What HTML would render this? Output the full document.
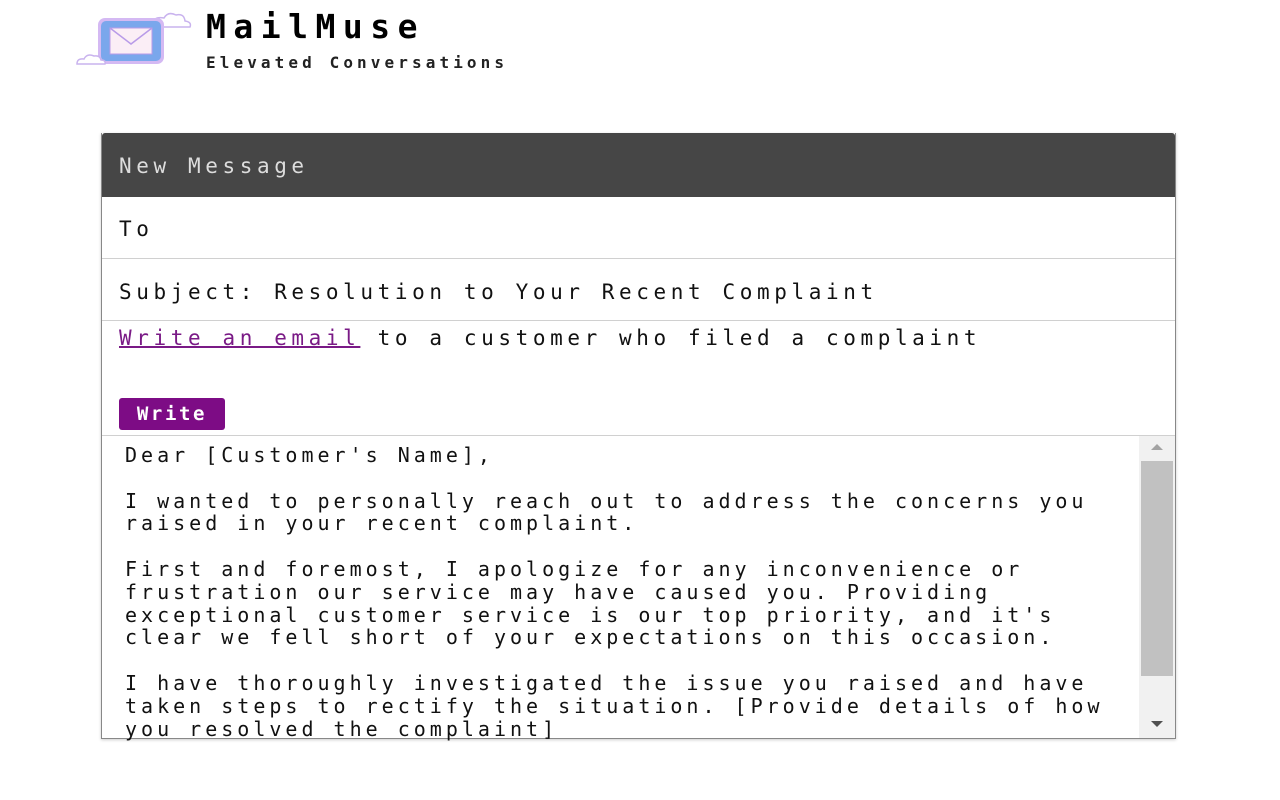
<!DOCTYPE html>
<html><head><style>
body{margin:0;width:1280px;height:800px;background:#fff;font-family:"DejaVu Sans Mono","Liberation Mono",monospace;position:relative;overflow:hidden}
.abs{position:absolute;white-space:pre}
.card{position:absolute;left:101px;top:133px;width:1073px;height:605px;border:1px solid #888;border-top:none;box-shadow:0 1px 3px rgba(0,0,0,.2)}
.hd{position:absolute;left:0;top:0;width:1073px;height:64px;background:#464646;border-radius:3px 3px 0 0}
.row{position:absolute;left:0;width:1073px;border-bottom:1px solid #d0d0d0}
.t{font-size:21px;letter-spacing:4.6px;color:#111}
.b{font-size:20px;letter-spacing:4.0px;color:#111;line-height:22.8px}
</style></head><body>
<svg class="abs" style="left:74px;top:6px" width="125" height="64" viewBox="0 0 125 64">
<path d="M78 18 q2-8 12-6 q4-7 12-3 q8-2 9 6 q7 1 5 6 h-38 q-4-1 0-3z" fill="#fff" stroke="#c9b3ee" stroke-width="1.5"/>
<rect x="24" y="12" width="66" height="46" rx="7" fill="#d4b9f3"/>
<rect x="27" y="15" width="60" height="40" rx="5" fill="#7aa7ec"/>
<rect x="36" y="22" width="42" height="26" fill="#fbeef6" stroke="#b99be8"/>
<path d="M36 22 L57 38 L78 22" fill="none" stroke="#b99be8" stroke-width="1.5"/>
<path d="M3 58 q0-6 7-5 q3-6 10-3 q6-1 7 4 q5 0 4 4z" fill="#fff" stroke="#c9b3ee" stroke-width="1.5"/>
</svg>
<div class="abs" style="left:206px;top:7px;font-size:33px;font-weight:bold;letter-spacing:7.5px">MailMuse</div>
<div class="abs" style="left:206px;top:53px;font-size:16px;letter-spacing:4.1px;font-weight:bold;color:#222">Elevated Conversations</div>
<div class="card">
<div class="hd"></div>
<div class="abs t" style="left:17px;top:21px;color:#ddd">New Message</div>
<div class="row" style="top:64px;height:61px"></div>
<div class="abs t" style="left:17px;top:84px">To</div>
<div class="row" style="top:126px;height:61px"></div>
<div class="abs t" style="left:17px;top:147px">Subject: Resolution to Your Recent Complaint</div>
<div class="row" style="top:188px;height:114px"></div>
<div class="abs t" style="left:17px;top:193px"><span style="color:#7a1a86;text-decoration:underline;text-decoration-thickness:2px">Write an email</span> to a customer who filed a complaint</div>
<div class="abs" style="left:17px;top:265px;width:106px;height:32px;background:#7d0c85;border-radius:3px;color:#fff;font-size:19px;font-weight:bold;letter-spacing:2.6px;line-height:33px;text-align:center">Write</div>
<div class="abs b" style="left:23px;top:311px">Dear [Customer's Name],

I wanted to personally reach out to address the concerns you
raised in your recent complaint.

First and foremost, I apologize for any inconvenience or
frustration our service may have caused you. Providing
exceptional customer service is our top priority, and it's
clear we fell short of your expectations on this occasion.

I have thoroughly investigated the issue you raised and have
taken steps to rectify the situation. [Provide details of how
you resolved the complaint]</div>
<div class="abs" style="left:1037px;top:303px;width:36px;height:302px;background:#f1f1f1"></div>
<div class="abs" style="left:1039px;top:328px;width:32px;height:215px;background:#c1c1c1"></div>
<div class="abs" style="left:1049px;top:311px;width:0;height:0;border-left:6px solid transparent;border-right:6px solid transparent;border-bottom:6px solid #a3a3a3"></div>
<div class="abs" style="left:1049px;top:588px;width:0;height:0;border-left:6px solid transparent;border-right:6px solid transparent;border-top:6px solid #505050"></div>
</div>
</body></html>
